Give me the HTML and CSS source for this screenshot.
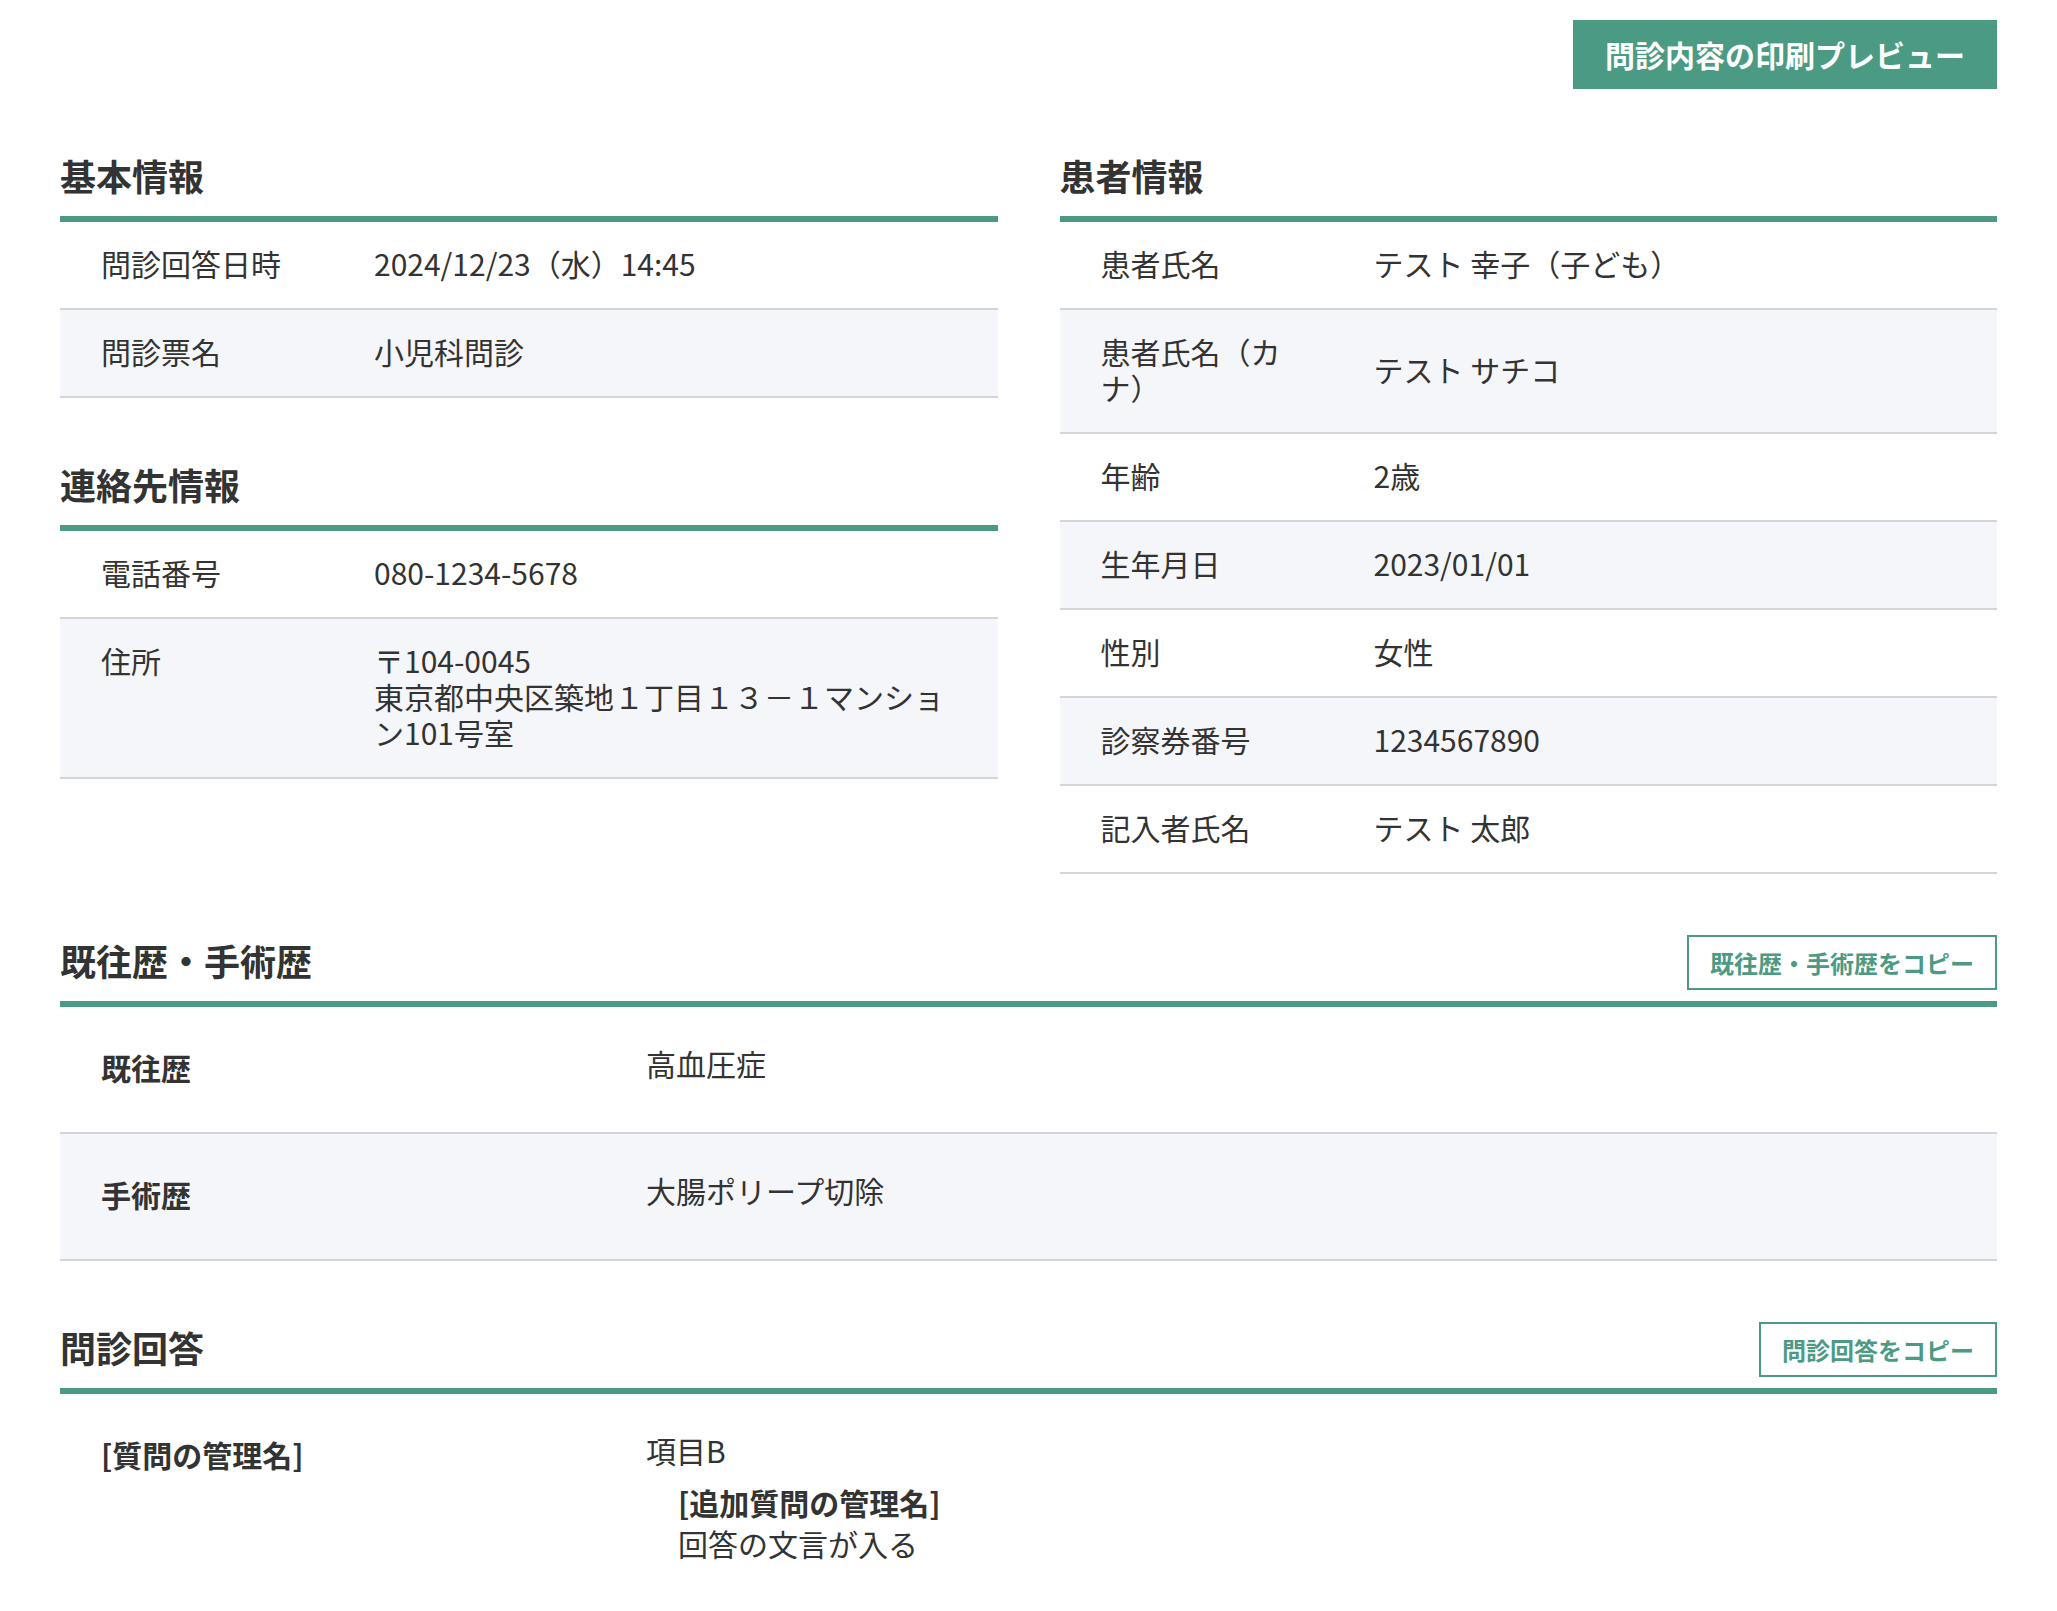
FILE: index.html
```html
<!DOCTYPE html>
<html lang="ja">
<head>
    <meta charset="UTF-8">
    <meta name="viewport" content="width=device-width, initial-scale=1.0">
    <title>問診内容</title>
    <link rel="stylesheet" href="styles.css">
</head>
<body>
    <div class="page">
        <div class="toolbar">
            <button class="print-button">問診内容の印刷プレビュー</button>
        </div>

        <div class="info-columns">
            <div class="info-column">
                <section class="section">
                    <div class="section-head">
                        <h2 class="section-title">基本情報</h2>
                    </div>
                    <div class="info-list">
                        <div class="info-row">
                            <div class="info-label">問診回答日時</div>
                            <div class="info-value">2024/12/23（水）14:45</div>
                        </div>
                        <div class="info-row">
                            <div class="info-label">問診票名</div>
                            <div class="info-value">小児科問診</div>
                        </div>
                    </div>
                </section>

                <section class="section">
                    <div class="section-head">
                        <h2 class="section-title">連絡先情報</h2>
                    </div>
                    <div class="info-list">
                        <div class="info-row">
                            <div class="info-label">電話番号</div>
                            <div class="info-value">080-1234-5678</div>
                        </div>
                        <div class="info-row">
                            <div class="info-label">住所</div>
                            <div class="info-value">〒104-0045<br>東京都中央区築地１丁目１３－１マンション101号室</div>
                        </div>
                    </div>
                </section>
            </div>

            <div class="info-column">
                <section class="section">
                    <div class="section-head">
                        <h2 class="section-title">患者情報</h2>
                    </div>
                    <div class="info-list">
                        <div class="info-row">
                            <div class="info-label">患者氏名</div>
                            <div class="info-value">テスト 幸子（子ども）</div>
                        </div>
                        <div class="info-row">
                            <div class="info-label">患者氏名（カナ）</div>
                            <div class="info-value">テスト サチコ</div>
                        </div>
                        <div class="info-row">
                            <div class="info-label">年齢</div>
                            <div class="info-value">2歳</div>
                        </div>
                        <div class="info-row">
                            <div class="info-label">生年月日</div>
                            <div class="info-value">2023/01/01</div>
                        </div>
                        <div class="info-row">
                            <div class="info-label">性別</div>
                            <div class="info-value">女性</div>
                        </div>
                        <div class="info-row">
                            <div class="info-label">診察券番号</div>
                            <div class="info-value">1234567890</div>
                        </div>
                        <div class="info-row">
                            <div class="info-label">記入者氏名</div>
                            <div class="info-value">テスト 太郎</div>
                        </div>
                    </div>
                </section>
            </div>
        </div>

        <section class="section">
            <div class="section-head">
                <h2 class="section-title">既往歴・手術歴</h2>
                <button class="copy-button">既往歴・手術歴をコピー</button>
            </div>
            <div class="qa-list">
                <div class="qa-row">
                    <div class="qa-label">既往歴</div>
                    <div class="qa-value">高血圧症</div>
                </div>
                <div class="qa-row">
                    <div class="qa-label">手術歴</div>
                    <div class="qa-value">大腸ポリープ切除</div>
                </div>
            </div>
        </section>

        <section class="section">
            <div class="section-head">
                <h2 class="section-title">問診回答</h2>
                <button class="copy-button">問診回答をコピー</button>
            </div>
            <div class="qa-list answers">
                <div class="qa-row">
                    <div class="qa-label">[質問の管理名]</div>
                    <div class="qa-value">
                        項目B
                        <div class="qa-sub">
                            <div class="qa-sub-label">[追加質問の管理名]</div>
                            <div>回答の文言が入る</div>
                        </div>
                    </div>
                </div>
            </div>
        </section>
    </div>
</body>
</html>
```

FILE: styles.css
```css
* {
    box-sizing: border-box;
}
body {
    margin: 0;
    background-color: #fff;
    color: #333;
    font-family: "Noto Sans CJK JP", "Noto Sans", sans-serif;
}
.page {
    padding: 20px 60px 0 60px;
}

/* top bar */
.toolbar {
    display: flex;
    justify-content: flex-end;
}
.print-button {
    background-color: #4b9b84;
    color: #fff;
    border: none;
    font-family: inherit;
    font-size: 30px;
    font-weight: bold;
    line-height: 37px;
    padding: 16px 32px;
    cursor: pointer;
}

/* two columns: basic + contact / patient */
.info-columns {
    display: grid;
    grid-template-columns: 1fr 1fr;
    column-gap: 62px;
    align-items: start;
}

.section {
    margin-top: 59px;
}
.section-head {
    display: flex;
    justify-content: space-between;
    align-items: flex-end;
    padding-bottom: 11px;
    border-bottom: 6px solid #4b9b84;
}
.section-title {
    margin: 0 0 3px 0;
    font-size: 36px;
    line-height: 54px;
    font-weight: bold;
    color: #333;
}
.copy-button {
    background-color: #fff;
    border: 2px solid #4b9b84;
    color: #4b9b84;
    font-family: inherit;
    font-size: 24px;
    font-weight: bold;
    line-height: 37px;
    padding: 7px 21px;
    cursor: pointer;
}

/* label / value rows */
.info-row {
    display: grid;
    grid-template-columns: 314px 1fr;
    border-bottom: 2px solid #d2d5da;
    font-size: 30px;
    line-height: 36px;
}
.info-row:nth-child(even) {
    background-color: #f5f6f9;
}
.info-label {
    align-self: start;
    padding: 23px 73px 27px 41px;
}
.info-value {
    align-self: center;
    padding: 23px 40px 27px 0;
}

/* history / answers */
.qa-row {
    display: grid;
    grid-template-columns: 586px 1fr;
    padding: 38px 0 42px 0;
    border-bottom: 2px solid #d2d5da;
    font-size: 30px;
}
.qa-row:nth-child(even) {
    background-color: #f5f6f9;
}
.answers .qa-row {
    border-bottom: none;
}
.qa-label {
    padding-left: 41px;
    font-weight: bold;
    line-height: 45px;
}
.qa-value {
    line-height: 36px;
    padding-right: 40px;
}
.qa-sub {
    margin: 12px 0 0 32px;
}
.qa-sub-label {
    font-weight: bold;
    line-height: 45px;
}
```
